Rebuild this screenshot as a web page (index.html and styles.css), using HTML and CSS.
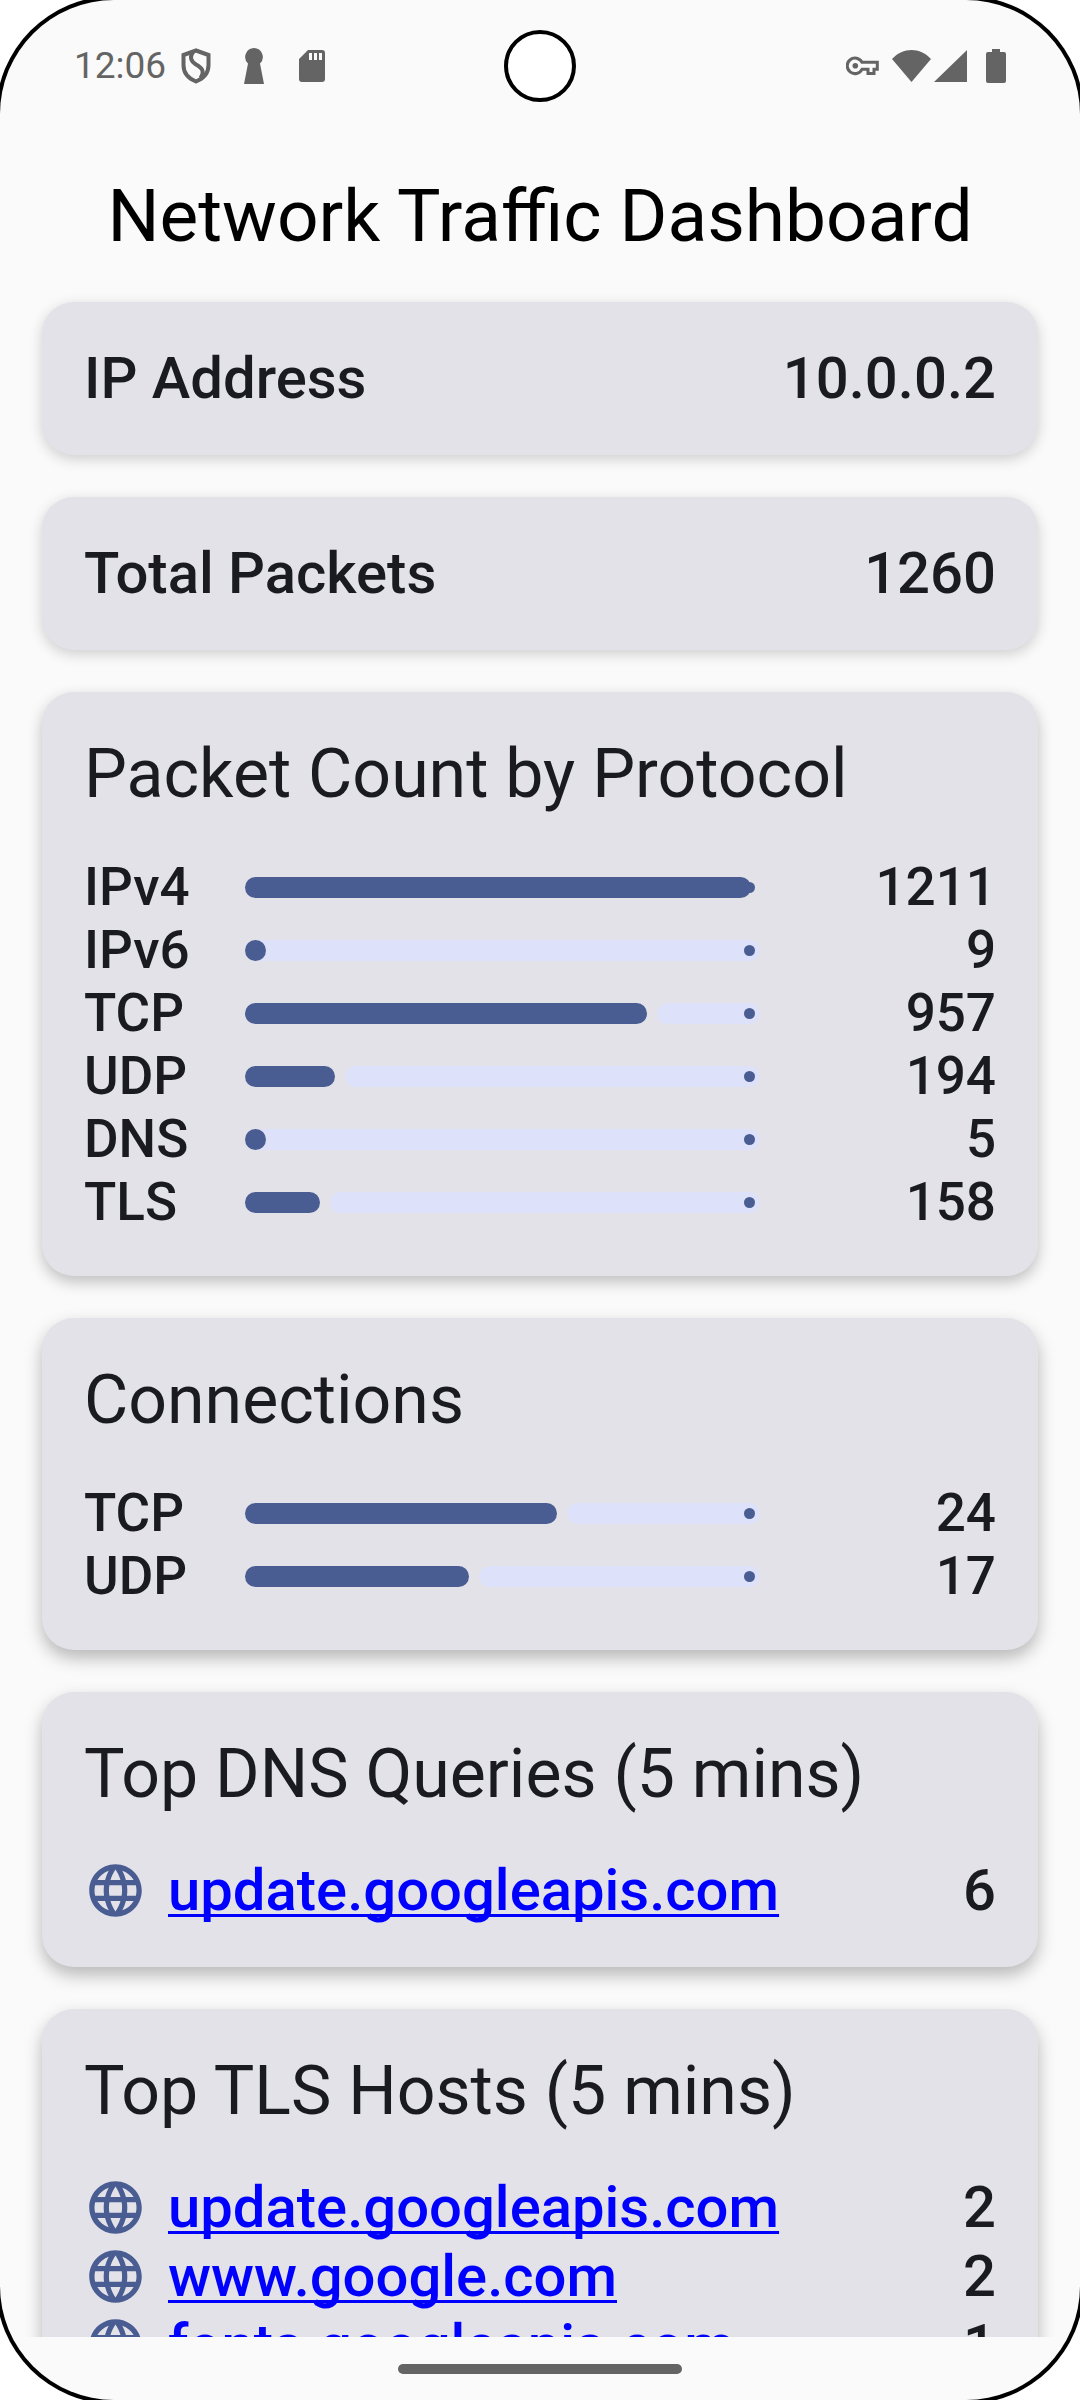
FILE: index.html
```html
<!DOCTYPE html>
<html lang="en">
<head>
<meta charset="utf-8">
<meta name="viewport" content="width=device-width, initial-scale=1">
<title>Network Traffic Dashboard</title>
<link rel="stylesheet" href="styles.css">
</head>
<body>
<svg class="sprite" aria-hidden="true">
  <symbol id="globe" viewBox="0 0 24 24"><path d="M11.99 2C6.47 2 2 6.48 2 12s4.47 10 9.99 10C17.52 22 22 17.52 22 12S17.52 2 11.99 2zm6.93 6h-2.95c-.32-1.25-.78-2.45-1.38-3.56 1.84.63 3.37 1.91 4.33 3.56zM12 4.04c.83 1.2 1.48 2.53 1.91 3.96h-3.82c.43-1.43 1.08-2.76 1.91-3.96zM4.26 14C4.1 13.36 4 12.69 4 12s.1-1.36.26-2h3.38c-.08.66-.14 1.32-.14 2s.06 1.34.14 2H4.26zm.82 2h2.95c.32 1.25.78 2.45 1.38 3.56-1.84-.63-3.37-1.9-4.33-3.56zm2.95-8H5.08c.96-1.66 2.49-2.93 4.33-3.56C8.81 5.55 8.35 6.75 8.03 8zM12 19.96c-.83-1.2-1.48-2.53-1.91-3.96h3.82c-.43 1.43-1.08 2.76-1.91 3.96zM14.34 14H9.66c-.09-.66-.16-1.32-.16-2s.07-1.35.16-2h4.68c.09.65.16 1.32.16 2s-.07 1.34-.16 2zm.25 5.56c.6-1.11 1.06-2.31 1.38-3.56h2.95c-.96 1.65-2.49 2.93-4.33 3.56zM16.36 14c.08-.66.14-1.32.14-2s-.06-1.34-.14-2h3.38c.16.64.26 1.31.26 2s-.1 1.36-.26 2h-3.38z"/></symbol>
</svg>
<div class="screen">
  <header class="status">
    <div class="status-group status-start">
      <time class="clock">12:06</time>
      <svg class="icon-shield" viewBox="0 0 30 36" role="img" aria-label="Shield"><path d="M15 2.500L27.500 7V17C27.500 25 22.500 30.500 15 33.500C7.500 30.500 2.500 25 2.500 17V7Z" fill="none" stroke="currentColor" stroke-width="4"/><path d="M12 4C8.500 9 9.500 13 15 16.500C21 20 24 23 19.500 30" fill="none" stroke="currentColor" stroke-width="4"/></svg>
      <svg class="icon-keyhole" viewBox="0 0 20 36" role="img" aria-label="Keyhole"><path d="M10 0a9 9 0 0 1 6 15.500L20 36H0L4 15.500A9 9 0 0 1 10 0z"/></svg>
      <svg class="icon-sd" viewBox="0 0 26 32" role="img" aria-label="Storage"><path fill-rule="evenodd" d="M9 0h14a3 3 0 0 1 3 3v26a3 3 0 0 1-3 3H3a3 3 0 0 1-3-3V9zM10 3v7h3V3zm5 0v7h3V3zm5 0v7h3V3z"/></svg>
    </div>
    <div class="camera"></div>
    <div class="status-group status-end">
      <svg class="icon-key" viewBox="0 0 33 20" role="img" aria-label="VPN"><path d="M16 6.300H31.300V13.300H28V17.500H22V13.300H16A7.800 7.800 0 1 1 16 6.300z" fill="none" stroke="currentColor" stroke-width="3"/><circle cx="9.300" cy="9.800" r="2.800"/></svg>
      <svg class="icon-wifi" viewBox="0 0 39 32" role="img" aria-label="Wi-Fi"><path d="M19.500 32L0 9C11-3 28-3 39 9z"/></svg>
      <svg class="icon-signal" viewBox="0 0 33 32" role="img" aria-label="Signal"><path d="M33 0v32H0z"/></svg>
      <svg class="icon-battery" viewBox="0 0 20 34" role="img" aria-label="Battery"><path d="M6 0h8v3h4a2 2 0 0 1 2 2v27a2 2 0 0 1-2 2H2a2 2 0 0 1-2-2V5a2 2 0 0 1 2-2h4z"/></svg>
    </div>
  </header>
  <main class="content">
    <h1 class="title">Network Traffic Dashboard</h1>
    <section class="card summary"><span>IP Address</span><span>10.0.0.2</span></section>
    <section class="card summary"><span>Total Packets</span><span>1260</span></section>
    <section class="card card-mid">
      <h2 class="heading">Packet Count by Protocol</h2>
      <table class="counts">
        <tr><th scope="row">IPv4</th><td class="bar-cell"><div class="bar"><span class="fill" style="width:98.3%"></span></div></td><td>1211</td></tr>
        <tr><th scope="row">IPv6</th><td class="bar-cell"><div class="bar bar-low"><span class="fill"></span></div></td><td>9</td></tr>
        <tr><th scope="row">TCP</th><td class="bar-cell"><div class="bar"><span class="fill" style="width:78%"></span><span class="rest"></span></div></td><td>957</td></tr>
        <tr><th scope="row">UDP</th><td class="bar-cell"><div class="bar"><span class="fill" style="width:17.5%"></span><span class="rest"></span></div></td><td>194</td></tr>
        <tr><th scope="row">DNS</th><td class="bar-cell"><div class="bar bar-low"><span class="fill"></span></div></td><td>5</td></tr>
        <tr><th scope="row">TLS</th><td class="bar-cell"><div class="bar"><span class="fill" style="width:14.6%"></span><span class="rest"></span></div></td><td>158</td></tr>
      </table>
    </section>
    <section class="card card-low">
      <h2 class="heading">Connections</h2>
      <table class="counts">
        <tr><th scope="row">TCP</th><td class="bar-cell"><div class="bar"><span class="fill" style="width:60.6%"></span><span class="rest"></span></div></td><td>24</td></tr>
        <tr><th scope="row">UDP</th><td class="bar-cell"><div class="bar"><span class="fill" style="width:43.5%"></span><span class="rest"></span></div></td><td>17</td></tr>
      </table>
    </section>
    <section class="card card-low">
      <h2 class="heading">Top DNS Queries (5 mins)</h2>
      <ul class="hosts">
        <li><svg class="globe" aria-hidden="true"><use href="#globe"/></svg><a href="https://update.googleapis.com">update.googleapis.com</a><span class="count">6</span></li>
      </ul>
    </section>
    <section class="card card-low">
      <h2 class="heading">Top TLS Hosts (5 mins)</h2>
      <ul class="hosts">
        <li><svg class="globe" aria-hidden="true"><use href="#globe"/></svg><a href="https://update.googleapis.com">update.googleapis.com</a><span class="count">2</span></li>
        <li><svg class="globe" aria-hidden="true"><use href="#globe"/></svg><a href="https://www.google.com">www.google.com</a><span class="count">2</span></li>
        <li><svg class="globe" aria-hidden="true"><use href="#globe"/></svg><a href="https://fonts.googleapis.com">fonts.googleapis.com</a><span class="count">1</span></li>
      </ul>
    </section>
  </main>
  <footer class="nav"><div class="pill"></div></footer>
</div>
</body>
</html>
```
FILE: styles.css
```css
* { box-sizing: border-box; }

body {
  margin: 0;
  overflow: hidden;
  background: #fff;
  color: #1a1b20;
  font-family: Roboto, "Liberation Sans", sans-serif;
}

.sprite { position: absolute; width: 0; height: 0; }

.screen {
  display: flex;
  flex-direction: column;
  height: 100vh;
  overflow: hidden;
  background: #fafafa;
  border-radius: 114px;
  box-shadow: 0 0 0 4px #000;
}

/* Status bar */
.status {
  display: grid;
  grid-template-columns: 1fr 72px 1fr;
  align-items: center;
  flex: none;
  height: 131px;
  padding: 0 74px;
  color: #646464;
}
.status-group { display: flex; align-items: center; }
.status-end { justify-content: flex-end; }
.status svg { fill: currentColor; flex: none; }
.clock { font-size: 37px; line-height: 44px; }
.icon-shield { width: 30px; height: 36px; margin-left: 15px; }
.icon-keyhole { width: 20px; height: 36px; margin-left: 33px; }
.icon-sd { width: 26px; height: 32px; margin-left: 35px; }
.icon-key { width: 33px; height: 20px; }
.icon-wifi { width: 39px; height: 32px; margin-left: 13px; }
.icon-signal { width: 33px; height: 32px; margin-left: 3px; }
.icon-battery { width: 20px; height: 34px; margin-left: 19px; }
.camera {
  width: 72px;
  height: 72px;
  border: 4px solid #000;
  border-radius: 50%;
  background: #fff;
}

/* Scrolling content */
.content {
  display: flex;
  flex-direction: column;
  gap: 42px;
  flex: 1;
  min-height: 0;
  overflow: hidden;
  padding: 42px 42px 0;
}
.title {
  margin: 0;
  color: #000;
  font-size: 73px;
  font-weight: 400;
  line-height: 87px;
  text-align: center;
  white-space: nowrap;
}
.card {
  flex: none;
  padding: 42px;
  border-radius: 32px;
  background: #e3e2e8;
  box-shadow: 0 4px 14px rgba(0, 0, 0, .18);
}
.card-mid { box-shadow: 0 6px 15px rgba(0, 0, 0, .24); }
.card-low { box-shadow: 0 8px 17px rgba(0, 0, 0, .27); }
.summary {
  display: flex;
  justify-content: space-between;
  font-size: 58px;
  font-weight: 500;
  line-height: 69px;
}
.heading {
  margin: 0 0 42px;
  font-size: 68px;
  font-weight: 400;
  line-height: 80px;
}

/* Protocol counts */
.counts {
  width: 100%;
  table-layout: fixed;
  border-collapse: collapse;
  font-size: 53px;
  font-weight: 500;
  line-height: 63px;
}
.counts th, .counts td { height: 63px; padding: 0; font-weight: 500; text-align: right; }
.counts th { width: 161px; text-align: left; }
.counts td { width: 236px; }
.counts .bar-cell { width: auto; vertical-align: middle; }
.bar { position: relative; display: flex; gap: 10px; height: 21px; }
.bar::after {
  content: "";
  position: absolute;
  top: 5px;
  right: 5px;
  width: 11px;
  height: 11px;
  border-radius: 50%;
  background: #495d92;
}
.fill { flex: none; min-width: 21px; border-radius: 11px; background: #495d92; }
.rest { flex: 1; border-radius: 11px; background: #dde1f9; }
.bar-low { border-radius: 11px; background: #dde1f9; }

/* Host lists */
.hosts { margin: 0; padding: 0; list-style: none; font-size: 58px; font-weight: 500; }
.hosts li { display: flex; align-items: center; gap: 21px; height: 69px; line-height: 69px; }
.globe { flex: none; width: 63px; height: 63px; fill: #495d92; }
.hosts a {
  color: #00f;
  text-decoration-thickness: 3px;
  text-underline-offset: 4px;
  text-decoration-skip-ink: none;
}
.count { margin-left: auto; }

/* Gesture bar */
.nav { display: flex; justify-content: center; flex: none; height: 63px; padding-top: 27px; }
.pill { width: 284px; height: 10px; border-radius: 5px; background: #646464; }
```
